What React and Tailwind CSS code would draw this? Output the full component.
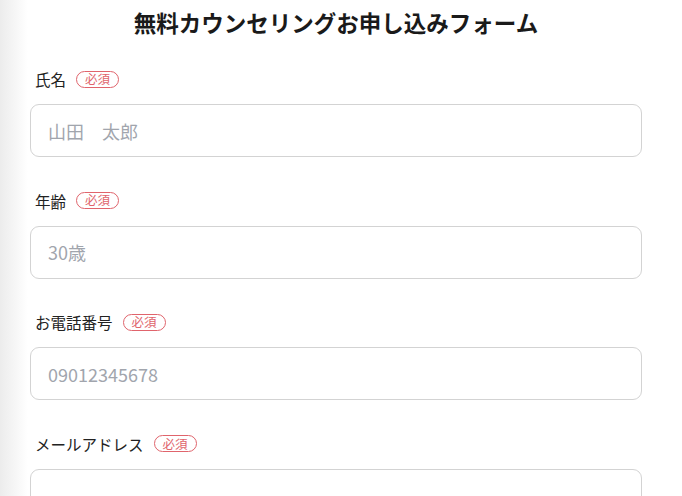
import React from 'react';

const fields = [
  { label: '氏名', placeholder: '山田　太郎', type: 'text' },
  { label: '年齢', placeholder: '30歳', type: 'text' },
  { label: 'お電話番号', placeholder: '09012345678', type: 'tel' },
  { label: 'メールアドレス', placeholder: '', type: 'email' },
];

const Field = ({ label, placeholder, type }) => (
  <div className="mb-[32.6px]">
    <label className="flex items-center h-[22px] pl-[5px] text-[15.5px] leading-[22px] text-[#222222]">
      <span>{label}</span>
      <span className="ml-[10px] flex items-center justify-center h-[17px] px-[8px] rounded-full border border-[#e0646c] text-[12.5px] leading-none text-[#e0646c]">
        必須
      </span>
    </label>
    <input
      type={type}
      placeholder={placeholder}
      className="mt-[14px] block w-full h-[53px] rounded-[9px] border border-[#d3d3d3] bg-white px-[17px] text-[18px] text-[#222222] placeholder:text-[#a1a5ad] outline-none"
    />
  </div>
);

export default function App() {
  return (
    <div
      className="relative min-h-[496px] w-[682px] overflow-hidden bg-white"
      style={{ fontFamily: '"Noto Sans CJK JP", "Noto Sans", sans-serif' }}
    >
      <div className="absolute left-0 top-0 bottom-0 w-[28px] bg-gradient-to-r from-[#ececec] to-white pointer-events-none" />
      <form className="relative ml-[30px] w-[612px] pt-[6px]">
        <h1 className="h-[32px] text-center text-[22.5px] font-bold leading-[32px] text-[#1a1a1a]">
          無料カウンセリングお申し込みフォーム
        </h1>
        <div className="mt-[30px]">
          {fields.map((f) => (
            <Field key={f.label} {...f} />
          ))}
        </div>
      </form>
    </div>
  );
}
